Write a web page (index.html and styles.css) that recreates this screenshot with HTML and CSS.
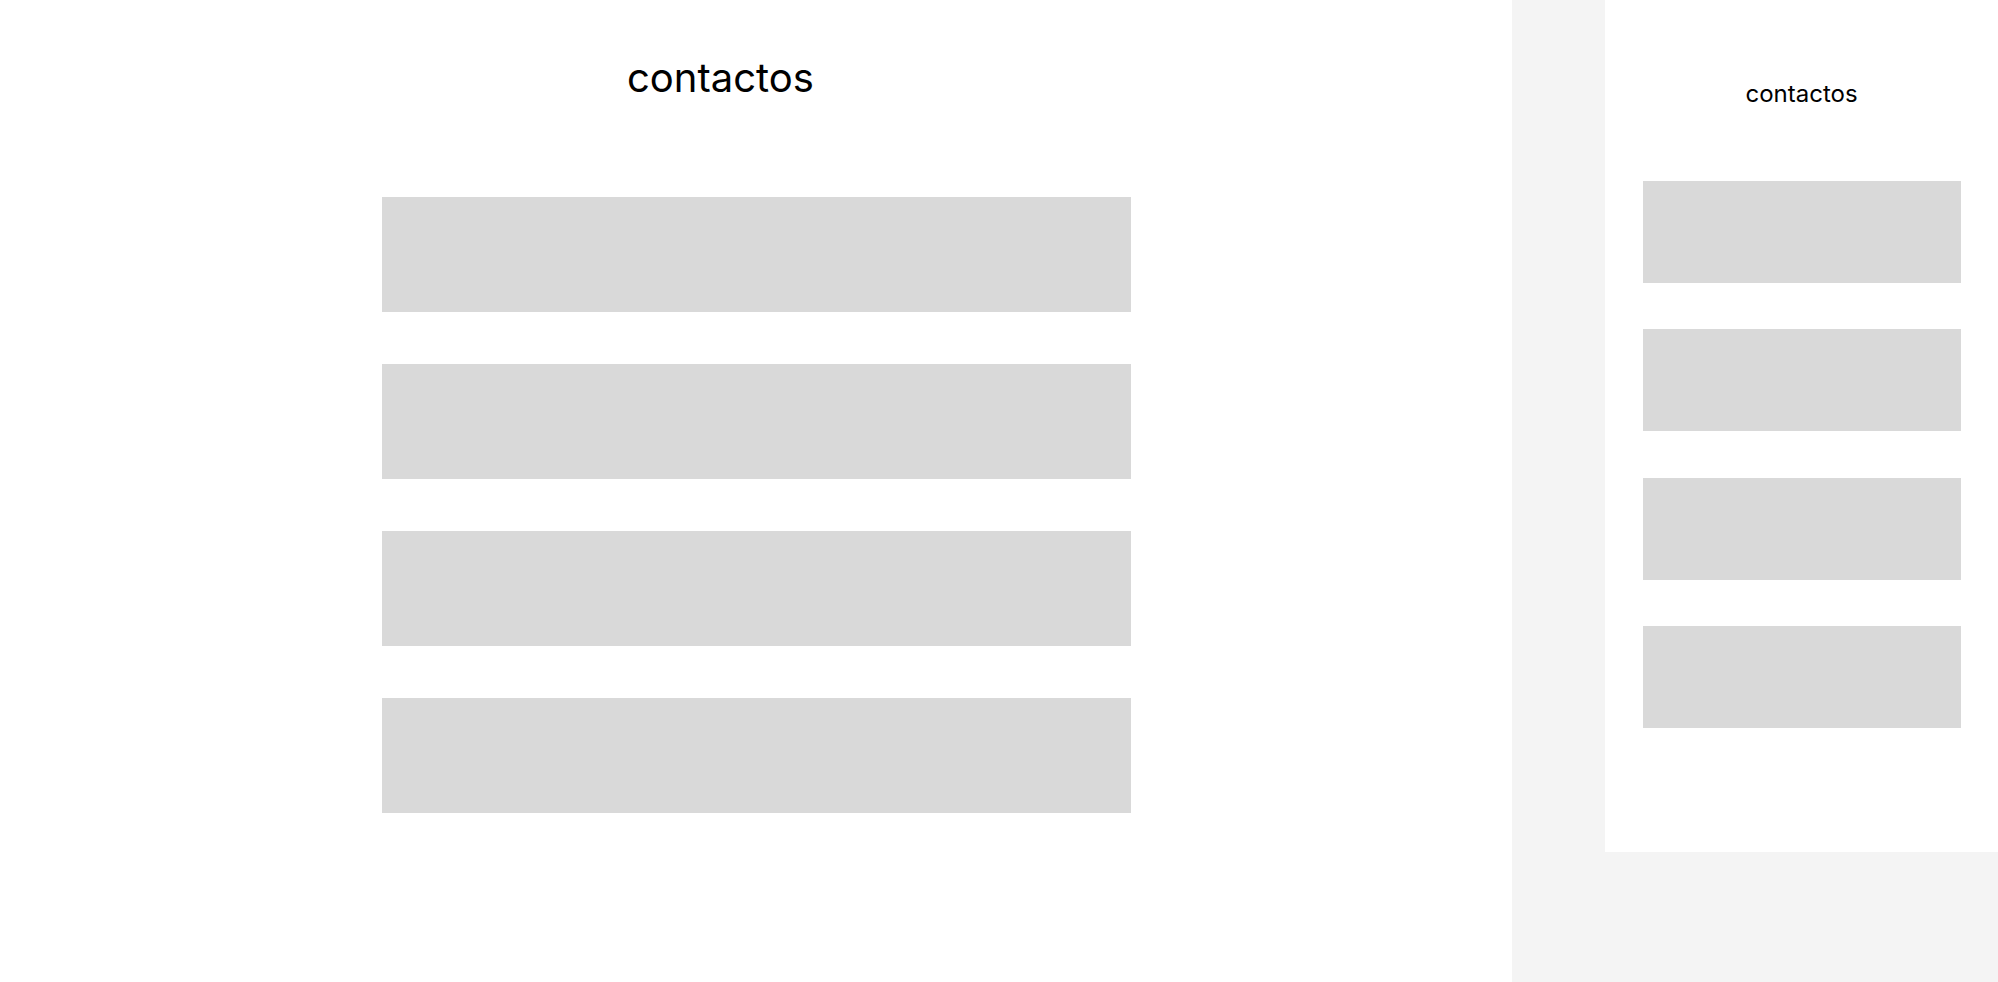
FILE: index.html
```html
<!DOCTYPE html>
<html lang="es">
<head>
<meta charset="utf-8">
<title>contactos</title>
<link rel="stylesheet" href="styles.css">
</head>
<body>
<div class="page">
  <main class="desktop">
    <h1 class="title">contactos</h1>
    <div class="list">
      <div class="item"></div>
      <div class="item"></div>
      <div class="item"></div>
      <div class="item"></div>
    </div>
  </main>
  <aside class="side">
    <div class="mobile">
      <h2 class="mtitle">contactos</h2>
      <div class="mlist">
        <div class="mitem"></div>
        <div class="mitem"></div>
        <div class="mitem"></div>
        <div class="mitem"></div>
      </div>
    </div>
  </aside>
</div>
</body>
</html>
```
FILE: styles.css
```css
* { box-sizing: border-box; }
html, body { margin: 0; padding: 0; background: #ffffff; }
body { font-family: Inter, "Noto Sans", sans-serif; color: #000; }
.page { display: flex; width: 1998px; height: 982px; overflow: hidden; }
.desktop { width: 1512px; flex: none; background: #fff; display: flex; flex-direction: column; }
.title { margin: 54px 0 0 627px; font-size: 40px; font-weight: 400; line-height: 48px; letter-spacing: 0; }
.list { margin: 95px 0 0 382px; display: flex; flex-direction: column; gap: 52px; }
.item { width: 749px; height: 115px; background: #d9d9d9; }
.side { flex: 1; background: #f4f4f4; padding-left: 93px; }
.mobile { width: 393px; height: 852px; background: #fff; padding: 79px 0 0 38px; display: flex; flex-direction: column; }
.mtitle { margin: 0; margin-left: -38px; text-align: center; font-size: 24px; font-weight: 400; line-height: 29px; }
.mlist { margin-top: 73px; display: flex; flex-direction: column; gap: 46.33px; }
.mitem { width: 318px; height: 102px; background: #d9d9d9; }
```
